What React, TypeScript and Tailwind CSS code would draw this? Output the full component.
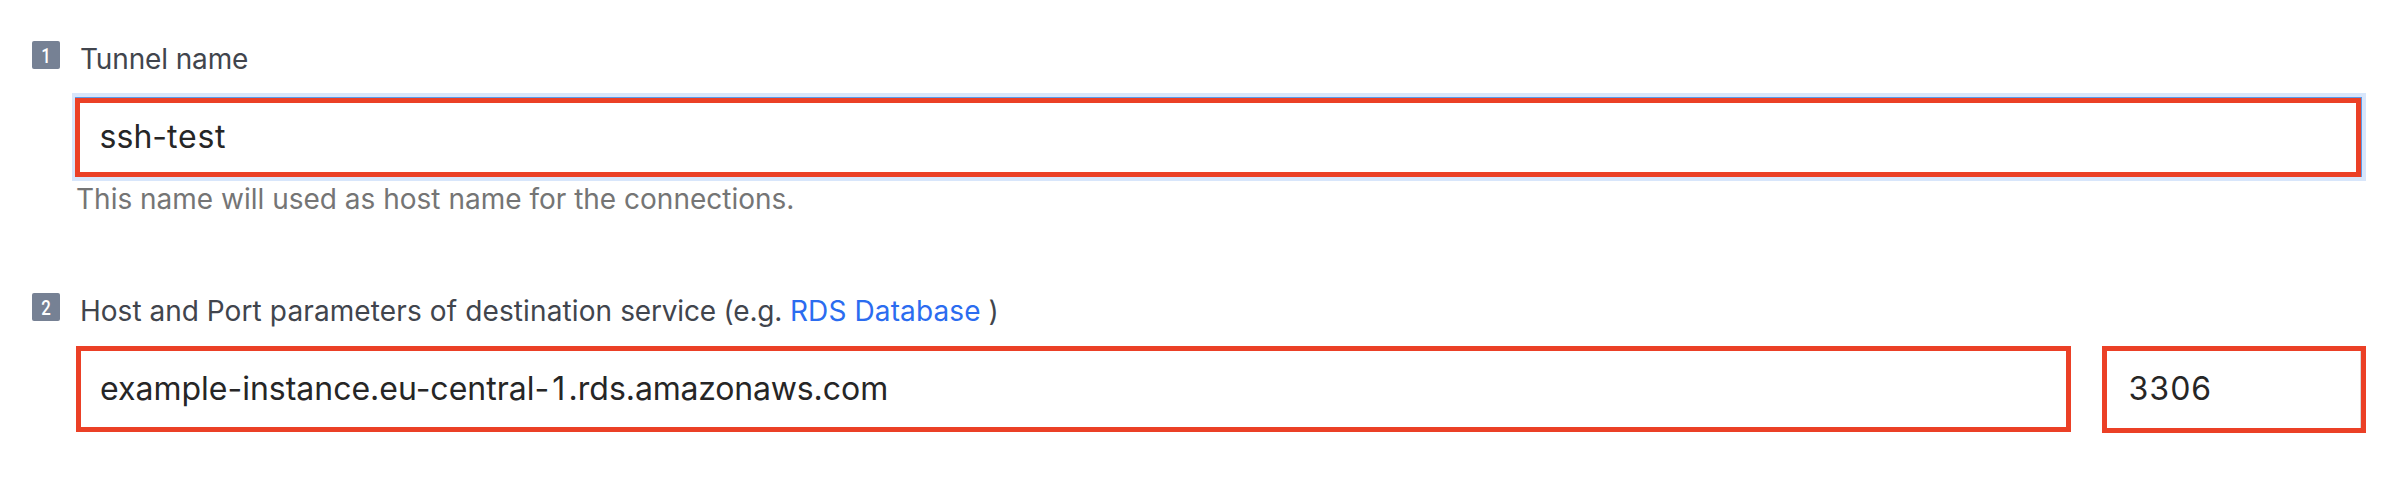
import type { ReactNode } from "react";

function Step({ n, children }: { n: number; children: ReactNode }) {
  return (
    <div className="flex h-8 items-start pl-8">
      <span className="mr-5 flex size-7 shrink-0 items-center justify-center rounded-[2px] bg-[#768194] pt-0.5 font-['Roboto',sans-serif] text-[21px] leading-7 font-medium text-white">
        <span className="scale-x-80">{n}</span>
      </span>
      <label className="mt-0.5 whitespace-pre text-[28px] leading-8 text-[#41454d]">{children}</label>
    </div>
  );
}

export default function App() {
  return (
    <main className="flex h-[488px] w-[2404px] flex-col bg-white pt-[41px] font-['Inter',sans-serif]">
      <Step n={1}>
        <span className="tracking-[-0.14px]">Tunnel name</span>
      </Step>
      <div className="mt-5 ml-[72px] flex h-[88px] w-[2294px] bg-[#d8e6fb] pt-1 pr-1 pb-1 pl-[3px]">
        <div className="flex w-full border-t border-r border-[#5b9ae8]">
          <div className="flex w-full items-center border-5 border-[#eb4026] bg-white pb-0.5 pl-[19.6px] text-[32px] leading-10 text-[#262626]">
            <span>
              ssh-<span className="tracking-[0.8px]">test</span>
            </span>
          </div>
        </div>
      </div>
      <p className="mt-0.5 ml-[76px] text-[28px] leading-8 text-[#757575]">
        This name will used as host name for the connections.
      </p>
      <div className="mt-[78px]">
        <Step n={2}>
          Host and <span className="tracking-[0.12px]">Port parameters of destination </span>
          <span className="tracking-[-0.18px]">service (e.g. </span>
          <a className="tracking-[0.12px] text-[#2b6cf0]">RDS Database</a> )
        </Step>
      </div>
      <div className="mt-[21px] ml-[76px] flex items-start gap-[31px] text-[32px] leading-10 text-[#262626]">
        <div className="flex h-[86px] w-[1995px] items-center border-5 border-[#eb4026] pl-[19px]">
          <span>
            example-instance.eu-central-<span className="px-[3.2px]">1</span>.rds.
            <span className="tracking-[-0.2px]">amazonaws</span>.com
          </span>
        </div>
        <div className="flex h-[87px] w-[264px] border-5 border-[#eb4026]">
          <div className="flex w-full items-center border-r border-[#d9d9d9] pb-px pl-[21.6px] tabular-nums">3306</div>
        </div>
      </div>
    </main>
  );
}
